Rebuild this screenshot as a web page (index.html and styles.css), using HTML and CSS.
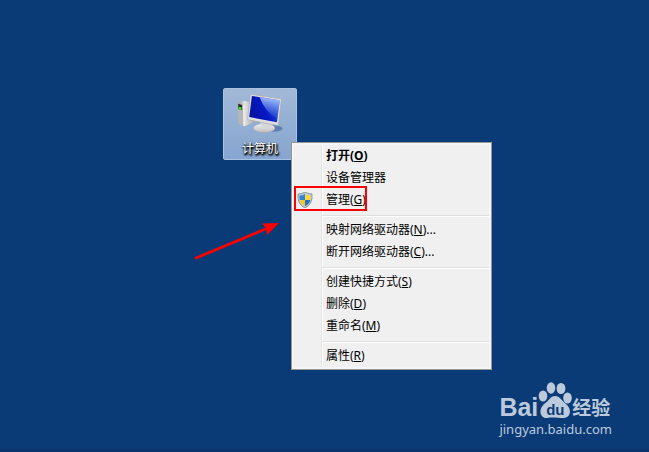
FILE: index.html
```html
<!DOCTYPE html>
<html lang="zh-CN">
<head>
  <meta charset="UTF-8" />
  <meta name="viewport" content="width=device-width, initial-scale=1.0" />
  <title>计算机</title>
  <link rel="stylesheet" href="styles.css">
</head>
<body>
  <main class="desktop">
    <button type="button" class="shortcut">
      <svg class="computer" viewBox="60 36 150 126" aria-hidden="true">
        <defs>
          <linearGradient id="screen" x1="0" y1="0.6" x2="1" y2="0.2">
            <stop offset="0" stop-color="#0512a0" />
            <stop offset="0.45" stop-color="#0618c4" />
            <stop offset="1" stop-color="#2f5be0" />
          </linearGradient>
          <linearGradient id="glare" x1="0.6" y1="0" x2="0.5" y2="1">
            <stop offset="0" stop-color="#c4deff" stop-opacity="0.85" />
            <stop offset="1" stop-color="#5f8cf0" stop-opacity="0.1" />
          </linearGradient>
          <linearGradient id="tower" x1="0" y1="0" x2="1" y2="0">
            <stop offset="0" stop-color="#8f9294" />
            <stop offset="0.4" stop-color="#e4e4e2" />
            <stop offset="1" stop-color="#9fa2a5" />
          </linearGradient>
          <linearGradient id="stand" x1="0" y1="0" x2="0" y2="1">
            <stop offset="0" stop-color="#f4f4f2" />
            <stop offset="1" stop-color="#b9babb" />
          </linearGradient>
        </defs>
        <ellipse cx="178" cy="148" rx="26" ry="10" fill="#5f80b0" />
        <path d="M67 70 L86 63 L106 68 L120 128 L86 141 L68 133z" fill="url(#tower)" />
        <path d="M67 70 L82 75 L84 140 L68 133z" fill="#b4b7b8" />
        <path d="M68 72 L80 76 L80 92 L68 88z" fill="#26292c" />
        <path d="M69 81 L78 83 L78 91 L69 89z" fill="#4ee020" />
        <path d="M84 76 L86 140" stroke="#fff" stroke-width="2" />
        <ellipse cx="148" cy="147" rx="33" ry="14" fill="url(#stand)" stroke="#a2a5a8" />
        <path d="M136 122 L176 130 L168 147 Q153 152 138 142z" fill="#d6d7d7" />
        <path d="M105 43 L201 57 L191 139 L97 121z" fill="#dedfe0" stroke="#a5a9ae" stroke-width="2" />
        <path d="M110 48 L196 61 L187 129 L102 113z" fill="url(#screen)" />
        <path d="M134 52 L196 61 L189 118 Q150 98 134 52z" fill="url(#glare)" />
      </svg>
      <span>计算机</span>
    </button>

    <div class="menu" role="menu">
      <button type="button" class="item default" role="menuitem"><span>打开(<u>O</u>)</span></button>
      <button type="button" class="item" role="menuitem"><span>设备管理器</span></button>
      <button type="button" class="item marked" role="menuitem">
        <svg class="shield" viewBox="0 0 16 16" aria-hidden="true">
          <path d="M8 0 Q11 2 15 2 Q16 12 8 16 Q0 12 1 2 Q5 2 8 0z" fill="#c3d0d8" stroke="#75838c" stroke-width="0.8" />
          <path d="M8 2 V8 H2.700 Q2.300 6 2.500 3.600 Q5.500 3.600 8 2z" fill="#2f86d6" />
          <path d="M8 2 Q10.500 3.600 13.500 3.600 Q13.700 6 13.300 8 H8z" fill="#ffd53a" />
          <path d="M2.700 8 H8 V14.200 Q3.500 12 2.700 8z" fill="#f9c922" />
          <path d="M8 8 H13.300 Q12.500 12 8 14.200z" fill="#2470c6" />
        </svg>
        <span>管理(<u>G</u>)</span>
      </button>
      <hr>
      <button type="button" class="item" role="menuitem"><span>映射网络驱动器(<u>N</u>)...</span></button>
      <button type="button" class="item" role="menuitem"><span>断开网络驱动器(<u>C</u>)...</span></button>
      <hr>
      <button type="button" class="item" role="menuitem"><span>创建快捷方式(<u>S</u>)</span></button>
      <button type="button" class="item" role="menuitem"><span>删除(<u>D</u>)</span></button>
      <button type="button" class="item" role="menuitem"><span>重命名(<u>M</u>)</span></button>
      <hr>
      <button type="button" class="item" role="menuitem"><span>属性(<u>R</u>)</span></button>
    </div>

    <svg class="arrow" viewBox="0 0 94 46" aria-hidden="true">
      <path d="M6 40 L78 10" stroke="#f00" stroke-width="2.8" stroke-linecap="round" />
      <path d="M89 5 L72 5.500 L76 10 L77 17z" fill="#f00" />
    </svg>

    <div class="watermark">
      <div class="brand">
        <span class="bai">Bai</span>
        <span class="paw">
          <svg viewBox="0 0 34 38" aria-hidden="true">
            <ellipse cx="5" cy="15" rx="4.300" ry="5.500" />
            <ellipse cx="13" cy="7" rx="4.300" ry="5.800" />
            <ellipse cx="23" cy="7.500" rx="4.400" ry="5.500" />
            <ellipse cx="29.500" cy="17" rx="4.300" ry="5.500" />
            <path d="M17 15 C22 15 24 20 28 23 C35 29 32 37 25 37 C20 37 14 36 9 37 C2 37 0 29 6 23 C11 20 12 15 17 15z" />
          </svg>
          <span class="du">du</span>
        </span>
        <span class="jingyan">经验</span>
      </div>
      <div class="site">jingyan.baidu.com</div>
    </div>
  </main>
</body>
</html>
```
FILE: styles.css
```css
body {
  margin: 0;
  background-color: #0a3b76;
  font-family: "Noto Sans", "Noto Sans CJK SC", sans-serif;
  font-size: 12px;
}
button {
  font: inherit;
  cursor: default;
}
.desktop {
  position: relative;
  box-sizing: border-box;
  min-height: 100vh;
  border-bottom: 3px solid #08346b;
  overflow: hidden;
}

/* desktop shortcut */
.shortcut {
  position: absolute;
  left: 223px;
  top: 88px;
  display: flex;
  flex-direction: column;
  align-items: center;
  box-sizing: border-box;
  width: 74px;
  height: 72px;
  padding: 3px 0 0;
  border: 1px solid #a9c2e2;
  border-radius: 2px;
  background: linear-gradient(#a2b8d6, #86a5d0);
  color: #fff;
  line-height: 20px;
  text-shadow: 1px 1px 2px #000, 0 1px 2px #000, 1px 2px 2px #000;
}
.computer {
  width: 50px;
  height: 42px;
  margin-bottom: 6px;
}

/* context menu */
.menu {
  position: absolute;
  left: 291px;
  top: 142px;
  box-sizing: border-box;
  width: 201px;
  padding: 2px;
  border: 1px solid #979797;
  background: linear-gradient(90deg, #e2e3e3 1px, #fff 1px) 29px 2px / 2px calc(100% - 4px) no-repeat, #f0f0f0;
  box-shadow: inset 0 0 0 2px #f5f5f5;
}
.item {
  position: relative;
  display: flex;
  align-items: center;
  box-sizing: border-box;
  width: 100%;
  height: 22px;
  padding: 0 0 2px 32px;
  border: 0;
  background: none;
  color: #000;
  white-space: nowrap;
}
.item u {
  text-underline-offset: 1px;
}
.default {
  font-weight: bold;
}
.marked::after {
  content: "";
  position: absolute;
  left: 0;
  top: -3px;
  box-sizing: border-box;
  width: 73px;
  height: 25px;
  border: 2px solid #f00;
}
.shield {
  position: absolute;
  left: 3px;
  top: 3px;
  width: 16px;
  height: 16px;
}
.menu hr {
  height: 1px;
  margin: 4px 0 2px 28px;
  border: 0;
  border-top: 1px solid #e0e0e0;
  background-color: #fff;
}

.arrow {
  position: absolute;
  left: 190px;
  top: 218px;
  width: 94px;
  height: 46px;
}

/* site mark */
.watermark {
  position: absolute;
  right: 37px;
  bottom: 10px;
  color: #bccadb;
}
.brand {
  display: flex;
  align-items: flex-end;
  height: 38px;
  font-family: "Liberation Sans", "Noto Sans CJK SC", sans-serif;
  font-weight: bold;
}
.bai {
  font-size: 25px;
  line-height: 24px;
}
.paw {
  position: relative;
  width: 34px;
  height: 38px;
}
.paw svg {
  display: block;
  fill: #bccadb;
}
.du {
  position: absolute;
  left: 0;
  bottom: 0;
  width: 100%;
  color: #0a3b76;
  font-size: 15px;
  line-height: 18px;
  text-align: center;
}
.jingyan {
  font-size: 19px;
  line-height: 20px;
}
.site {
  font-family: "Noto Sans", sans-serif;
  font-size: 13px;
  line-height: 20px;
}
```
